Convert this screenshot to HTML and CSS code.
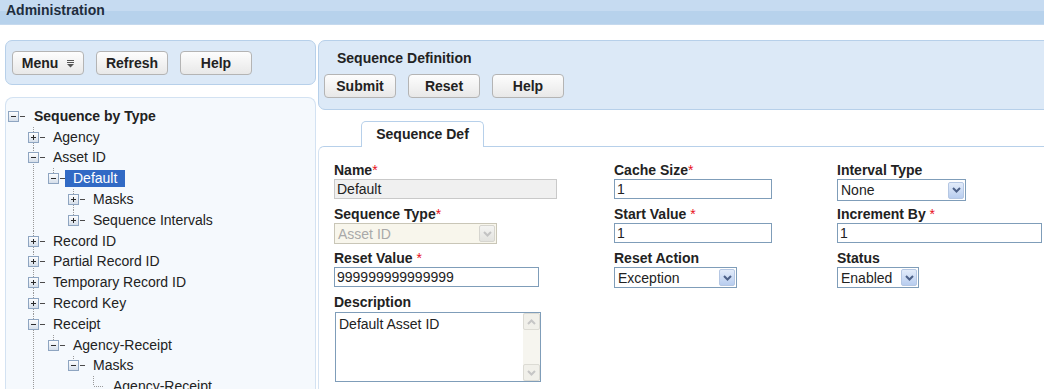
FILE: index.html
```html
<!DOCTYPE html>
<html lang="en">
  <head>
    <meta charset="UTF-8" />
    <title>Administration</title>
    <link rel="stylesheet" href="styles.css">
  </head>
  <body>
    <svg class="defs" width="0" height="0">
      <defs>
        <linearGradient id="boxfill" x1="0" y1="0" x2="0" y2="1">
          <stop offset="0" stop-color="#ffffff" />
          <stop offset="1" stop-color="#d3dde9" />
        </linearGradient>
        <symbol id="minus" viewBox="0 0 17 11">
          <rect x="0.5" y="0.5" width="10" height="10" fill="url(#boxfill)" stroke="#8ea5c1" />
          <line x1="3" y1="5.5" x2="8" y2="5.5" stroke="#2b2b2b" />
          <line x1="12" y1="5.5" x2="17" y2="5.5" stroke="#4a4a4a" />
        </symbol>
        <symbol id="plus" viewBox="0 0 17 11">
          <rect x="0.5" y="0.5" width="10" height="10" fill="url(#boxfill)" stroke="#8ea5c1" />
          <line x1="3" y1="5.5" x2="8" y2="5.5" stroke="#2b2b2b" />
          <line x1="5.5" y1="3" x2="5.5" y2="8" stroke="#2b2b2b" />
          <line x1="12" y1="5.5" x2="17" y2="5.5" stroke="#4a4a4a" />
        </symbol>
        <symbol id="chev" viewBox="0 0 9 6">
          <polyline points="1,1 4.5,4.5 8,1" fill="none" stroke="currentColor" stroke-width="2" />
        </symbol>
      </defs>
    </svg>

    <div class="header">Administration</div>

    <div class="main">
      <div class="side">
        <div class="panel toolbar">
          <button type="button" class="btn">
            Menu
            <svg class="menu-icon" width="7" height="8" viewBox="0 0 7 8">
              <rect x="0" y="0" width="7" height="1" fill="#555" />
              <rect x="0" y="2" width="7" height="1" fill="#555" />
              <polygon points="0,4 7,4 3.5,7.5" fill="#555" />
            </svg>
          </button>
          <button type="button" class="btn">Refresh</button>
          <button type="button" class="btn">Help</button>
        </div>

        <div class="tree">
          <div class="node root">
            <div class="row"><svg class="ico"><use href="#minus" /></svg><span class="label">Sequence by Type</span></div>
            <div class="kids">
              <div class="node">
                <div class="row"><svg class="ico"><use href="#plus" /></svg><span class="label">Agency</span></div>
              </div>
              <div class="node">
                <div class="row"><svg class="ico"><use href="#minus" /></svg><span class="label">Asset ID</span></div>
                <div class="kids">
                  <div class="node last">
                    <div class="row"><svg class="ico"><use href="#minus" /></svg><span class="label selected">Default</span></div>
                    <div class="kids">
                      <div class="node">
                        <div class="row"><svg class="ico"><use href="#plus" /></svg><span class="label">Masks</span></div>
                      </div>
                      <div class="node last">
                        <div class="row"><svg class="ico"><use href="#plus" /></svg><span class="label">Sequence Intervals</span></div>
                      </div>
                    </div>
                  </div>
                </div>
              </div>
              <div class="node">
                <div class="row"><svg class="ico"><use href="#plus" /></svg><span class="label">Record ID</span></div>
              </div>
              <div class="node">
                <div class="row"><svg class="ico"><use href="#plus" /></svg><span class="label">Partial Record ID</span></div>
              </div>
              <div class="node">
                <div class="row"><svg class="ico"><use href="#plus" /></svg><span class="label">Temporary Record ID</span></div>
              </div>
              <div class="node">
                <div class="row"><svg class="ico"><use href="#plus" /></svg><span class="label">Record Key</span></div>
              </div>
              <div class="node">
                <div class="row"><svg class="ico"><use href="#minus" /></svg><span class="label">Receipt</span></div>
                <div class="kids">
                  <div class="node last">
                    <div class="row"><svg class="ico"><use href="#minus" /></svg><span class="label">Agency-Receipt</span></div>
                    <div class="kids">
                      <div class="node last">
                        <div class="row"><svg class="ico"><use href="#minus" /></svg><span class="label">Masks</span></div>
                        <div class="kids">
                          <div class="node last">
                            <div class="row"><svg class="ico" viewBox="0 0 17 11"><line x1="6" y1="5.5" x2="16" y2="5.5" stroke="#9a9a9a" stroke-dasharray="1 1" /></svg><span class="label">Agency-Receipt</span></div>
                          </div>
                        </div>
                      </div>
                    </div>
                  </div>
                </div>
              </div>
            </div>
          </div>
        </div>
      </div>

      <div class="detail">
        <div class="panel deftools">
          <div class="title">Sequence Definition</div>
          <div class="btns">
            <button type="button" class="btn">Submit</button>
            <button type="button" class="btn">Reset</button>
            <button type="button" class="btn">Help</button>
          </div>
        </div>

        <div class="tabs">
          <div class="tab">Sequence Def</div>
        </div>

        <div class="content">
          <div class="form">
            <div class="field">
              <label>Name<span class="req">*</span></label>
              <input class="txt readonly w-name" type="text" value="Default" readonly />
            </div>
            <div class="field">
              <label>Cache Size<span class="req">*</span></label>
              <input class="txt w-short" type="text" value="1" />
            </div>
            <div class="field">
              <label>Interval Type</label>
              <div class="sel w-interval"><span>None</span><i class="drop"><svg><use href="#chev" /></svg></i></div>
            </div>

            <div class="field">
              <label>Sequence Type<span class="req">*</span></label>
              <div class="sel disabled w-type"><span>Asset ID</span><i class="drop"><svg><use href="#chev" /></svg></i></div>
            </div>
            <div class="field">
              <label>Start Value <span class="req">*</span></label>
              <input class="txt w-short" type="text" value="1" />
            </div>
            <div class="field">
              <label>Increment By <span class="req">*</span></label>
              <input class="txt w-long" type="text" value="1" />
            </div>

            <div class="field">
              <label>Reset Value <span class="req">*</span></label>
              <input class="txt w-long" type="text" value="999999999999999" />
            </div>
            <div class="field">
              <label>Reset Action</label>
              <div class="sel w-action"><span>Exception</span><i class="drop"><svg><use href="#chev" /></svg></i></div>
            </div>
            <div class="field">
              <label>Status</label>
              <div class="sel w-status"><span>Enabled</span><i class="drop"><svg><use href="#chev" /></svg></i></div>
            </div>

            <div class="field">
              <label>Description</label>
              <div class="area">
                <div class="area-text">Default Asset ID</div>
                <div class="scroll">
                  <i class="sbtn up"><svg><use href="#chev" /></svg></i>
                  <i class="sbtn"><svg><use href="#chev" /></svg></i>
                </div>
              </div>
            </div>
          </div>
        </div>
      </div>
    </div>
  </body>
</html>
```

FILE: styles.css
```css
html,
body {
  margin: 0;
  height: 100%;
  overflow: hidden;
}

body {
  font-family: "Liberation Sans", Arial, sans-serif;
  font-size: 14px;
  color: #222;
  background: #fff;
}

.defs {
  display: block;
  width: 0;
  height: 0;
}

.header {
  height: 24px;
  padding-left: 6px;
  line-height: 20px;
  font-weight: bold;
  color: #1e2d3d;
  background: linear-gradient(#c6dbf1 0, #c6dbf1 11px, #b7d2ec 11px);
  border-bottom: 1px solid #c5d9ee;
}

.main {
  display: flex;
  gap: 2px;
  padding: 15px 0 0 5px;
  height: 100%;
}

.side {
  width: 311px;
  flex: none;
  display: flex;
  flex-direction: column;
}

.panel {
  background: #dce9f7;
  border: 1px solid #b7d0ea;
  border-radius: 7px;
}

.toolbar {
  box-sizing: border-box;
  height: 45px;
  display: flex;
  gap: 12px;
  padding: 10px 0 0 6px;
}

.btn {
  box-sizing: border-box;
  width: 72px;
  height: 24px;
  padding: 0;
  display: inline-flex;
  align-items: center;
  justify-content: center;
  gap: 9px;
  font-family: inherit;
  font-size: 14px;
  font-weight: bold;
  color: #222;
  background: linear-gradient(#fdfdfd, #e8e8e8);
  border: 1px solid #b4b4b4;
  border-radius: 4px;
}

.menu-icon {
  margin-top: 1px;
}

/* tree */

.tree {
  margin-top: 12px;
  flex: 1;
  background: #f5f9fd;
  border: 1px solid #d3e2f2;
  border-bottom: none;
  border-radius: 8px 8px 0 0;
  padding: 8px 0 0 2px;
}

.row {
  display: flex;
  align-items: center;
  height: 20.8px;
}

.ico {
  width: 17px;
  height: 11px;
  flex: none;
}

.label {
  padding: 0 8px;
  line-height: 17px;
  white-space: nowrap;
}

.root > .row .label {
  font-weight: bold;
  padding-left: 9px;
}

.label.selected {
  background: #316ac5;
  color: #fff;
}

.kids {
  margin-left: 20px;
}

.kids > .node {
  background: repeating-linear-gradient(#9a9a9a 0, #9a9a9a 1px, transparent 1px, transparent 2px) no-repeat 5px 0 / 1px 100%;
}

.kids > .node.last {
  background-size: 1px 10px;
}

/* detail side */

.detail {
  flex: 1;
  margin-right: -10px;
  display: flex;
  flex-direction: column;
}

.deftools {
  box-sizing: border-box;
  height: 70px;
  padding: 9px 0 0 5px;
}

.title {
  font-weight: bold;
  line-height: 16px;
  padding-left: 13px;
  margin-bottom: 8px;
}

.btns {
  display: flex;
  gap: 12px;
}

.tabs {
  padding: 11px 0 0 43px;
}

.tab {
  box-sizing: border-box;
  width: 123px;
  height: 26px;
  margin-bottom: -1px;
  position: relative;
  background: #fff;
  border: 1px solid #b7d0ea;
  border-bottom: none;
  border-radius: 5px 5px 0 0;
  text-align: center;
  line-height: 24px;
  font-weight: bold;
}

.content {
  flex: 1;
  background: #fff;
  border-top: 1px solid #b7d0ea;
  border-left: 1px solid #d5e3f2;
  border-radius: 6px 0 0 0;
  padding: 15px 0 0 15px;
}

.form {
  display: grid;
  grid-template-columns: 280px 223px 1fr;
  grid-auto-rows: 44px;
}

.field label {
  display: block;
  font-weight: bold;
  line-height: 16px;
  margin-bottom: 1px;
  color: #222;
}

.req {
  color: #e8101a;
  font-weight: normal;
}

.txt {
  display: block;
  box-sizing: border-box;
  height: 20px;
  margin: 0;
  padding: 0 2px;
  font-family: inherit;
  font-size: 14px;
  color: #222;
  background: #fff;
  border: 1px solid #7f9db9;
  outline: none;
}

.txt.readonly {
  background: #f0f0f0;
  border-color: #c9c9c9;
}

.w-name { width: 223px; }
.w-short { width: 158px; }
.w-long { width: 205px; }

.sel {
  box-sizing: border-box;
  height: 21px;
  display: flex;
  align-items: center;
  background: #fff;
  border: 1px solid #7f9db9;
}

.sel span {
  flex: 1;
  padding-left: 3px;
}

.drop {
  box-sizing: border-box;
  width: 16px;
  height: 17px;
  margin-right: 1px;
  display: flex;
  align-items: center;
  justify-content: center;
  color: #4d6188;
  background: linear-gradient(#e3ecfa, #b8cdef);
  border: 1px solid #b5c7e3;
  border-radius: 2px;
}

.drop svg,
.sbtn svg {
  width: 9px;
  height: 6px;
}

.sel.disabled {
  border-color: #c9c6b7;
  background: #f8f6ec;
  color: #a9a9a9;
}

.sel.disabled .drop {
  color: #c3c3c3;
  background: linear-gradient(#f4f4f2, #e3e3df);
  border-color: #d6d5cf;
}

.w-type { width: 163px; }
.w-action { width: 123px; }
.w-interval { width: 129px; height: 22px; }
.w-status { width: 82px; }

.area {
  box-sizing: border-box;
  width: 206px;
  height: 70px;
  margin: 2px 0 0 1px;
  display: flex;
  border: 1px solid #7f9db9;
}

.area-text {
  flex: 1;
  padding: 3px 3px;
  line-height: 16px;
}

.scroll {
  width: 17px;
  display: flex;
  flex-direction: column;
  justify-content: space-between;
  background: #f6f5ef;
}

.sbtn {
  box-sizing: border-box;
  height: 17px;
  display: flex;
  align-items: center;
  justify-content: center;
  color: #c6c6c6;
  background: #f1f0ea;
  border: 1px solid #dcdbd4;
  border-radius: 2px;
}

.sbtn.up svg {
  transform: rotate(180deg);
}
```
